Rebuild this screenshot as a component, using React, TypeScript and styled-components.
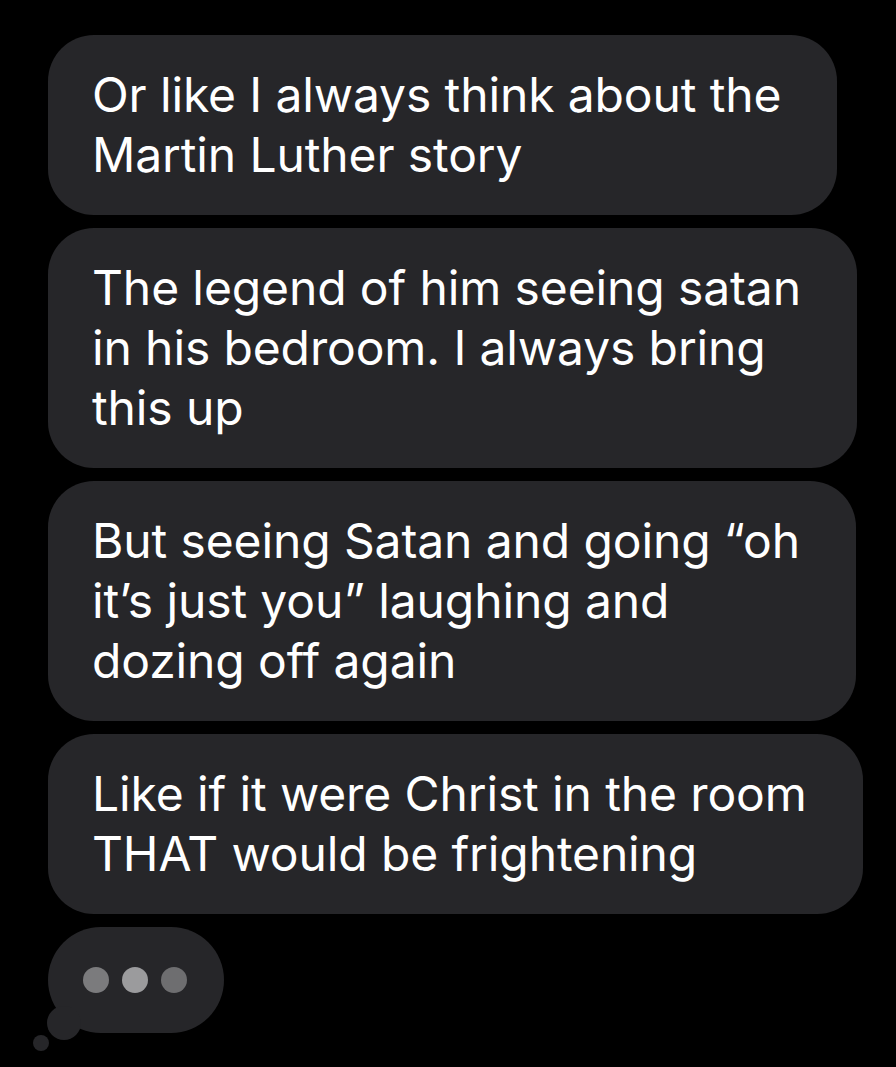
import React from "react";
import styled, { createGlobalStyle } from "styled-components";

const Global = createGlobalStyle`
  html, body { margin: 0; padding: 0; background: #000; }
  body { width: 896px; height: 1067px; overflow: hidden; }
`;

const Page = styled.div`
  box-sizing: border-box;
  width: 896px;
  height: 1067px;
  background: #000;
  padding: 35px 0 0 48px;
  display: flex;
  flex-direction: column;
  align-items: flex-start;
  gap: 13px;
`;

const Bubble = styled.div`
  box-sizing: border-box;
  background: #262629;
  color: #fff;
  border-radius: 46px;
  padding: 30px 56px 30px 44px;
  font-family: Inter, "Liberation Sans", sans-serif;
  font-size: 48px;
  line-height: 60px;
  letter-spacing: -0.12px;
  white-space: nowrap;
`;

const TypingWrap = styled.div`
  position: relative;
  width: 176px;
  height: 106px;
`;

const TypingBubble = styled.div`
  box-sizing: border-box;
  width: 176px;
  height: 106px;
  border-radius: 53px;
  background: #262629;
  display: flex;
  align-items: center;
  justify-content: center;
  gap: 13px;
  padding-right: 2px;
`;

const Dot = styled.span<{ $shade: string }>`
  width: 26px;
  height: 26px;
  border-radius: 50%;
  background: ${(p) => p.$shade};
`;

const TailBig = styled.span`
  position: absolute;
  left: -1px;
  top: 79px;
  width: 34px;
  height: 34px;
  border-radius: 50%;
  background: #262629;
`;

const TailSmall = styled.span`
  position: absolute;
  left: -15px;
  top: 108px;
  width: 16px;
  height: 16px;
  border-radius: 50%;
  background: #262629;
`;

const messages = [
  ["Or like I always think about the", "Martin Luther story"],
  ["The legend of him seeing satan", "in his bedroom. I always bring", "this up"],
  ["But seeing Satan and going \u201Coh", "it\u2019s just you\u201D laughing and", "dozing off again"],
  ["Like if it were Christ in the room", "THAT would be frightening"],
];

export default function App() {
  return (
    <>
      <Global />
      <Page>
        {messages.map((lines, i) => (
          <Bubble key={i}>
            {lines.map((l, j) => (
              <div key={j}>{l}</div>
            ))}
          </Bubble>
        ))}
        <TypingWrap>
          <TypingBubble>
            <Dot $shade="#7b7b7d" />
            <Dot $shade="#9b9b9d" />
            <Dot $shade="#6e6e70" />
          </TypingBubble>
          <TailBig />
          <TailSmall />
        </TypingWrap>
      </Page>
    </>
  );
}
